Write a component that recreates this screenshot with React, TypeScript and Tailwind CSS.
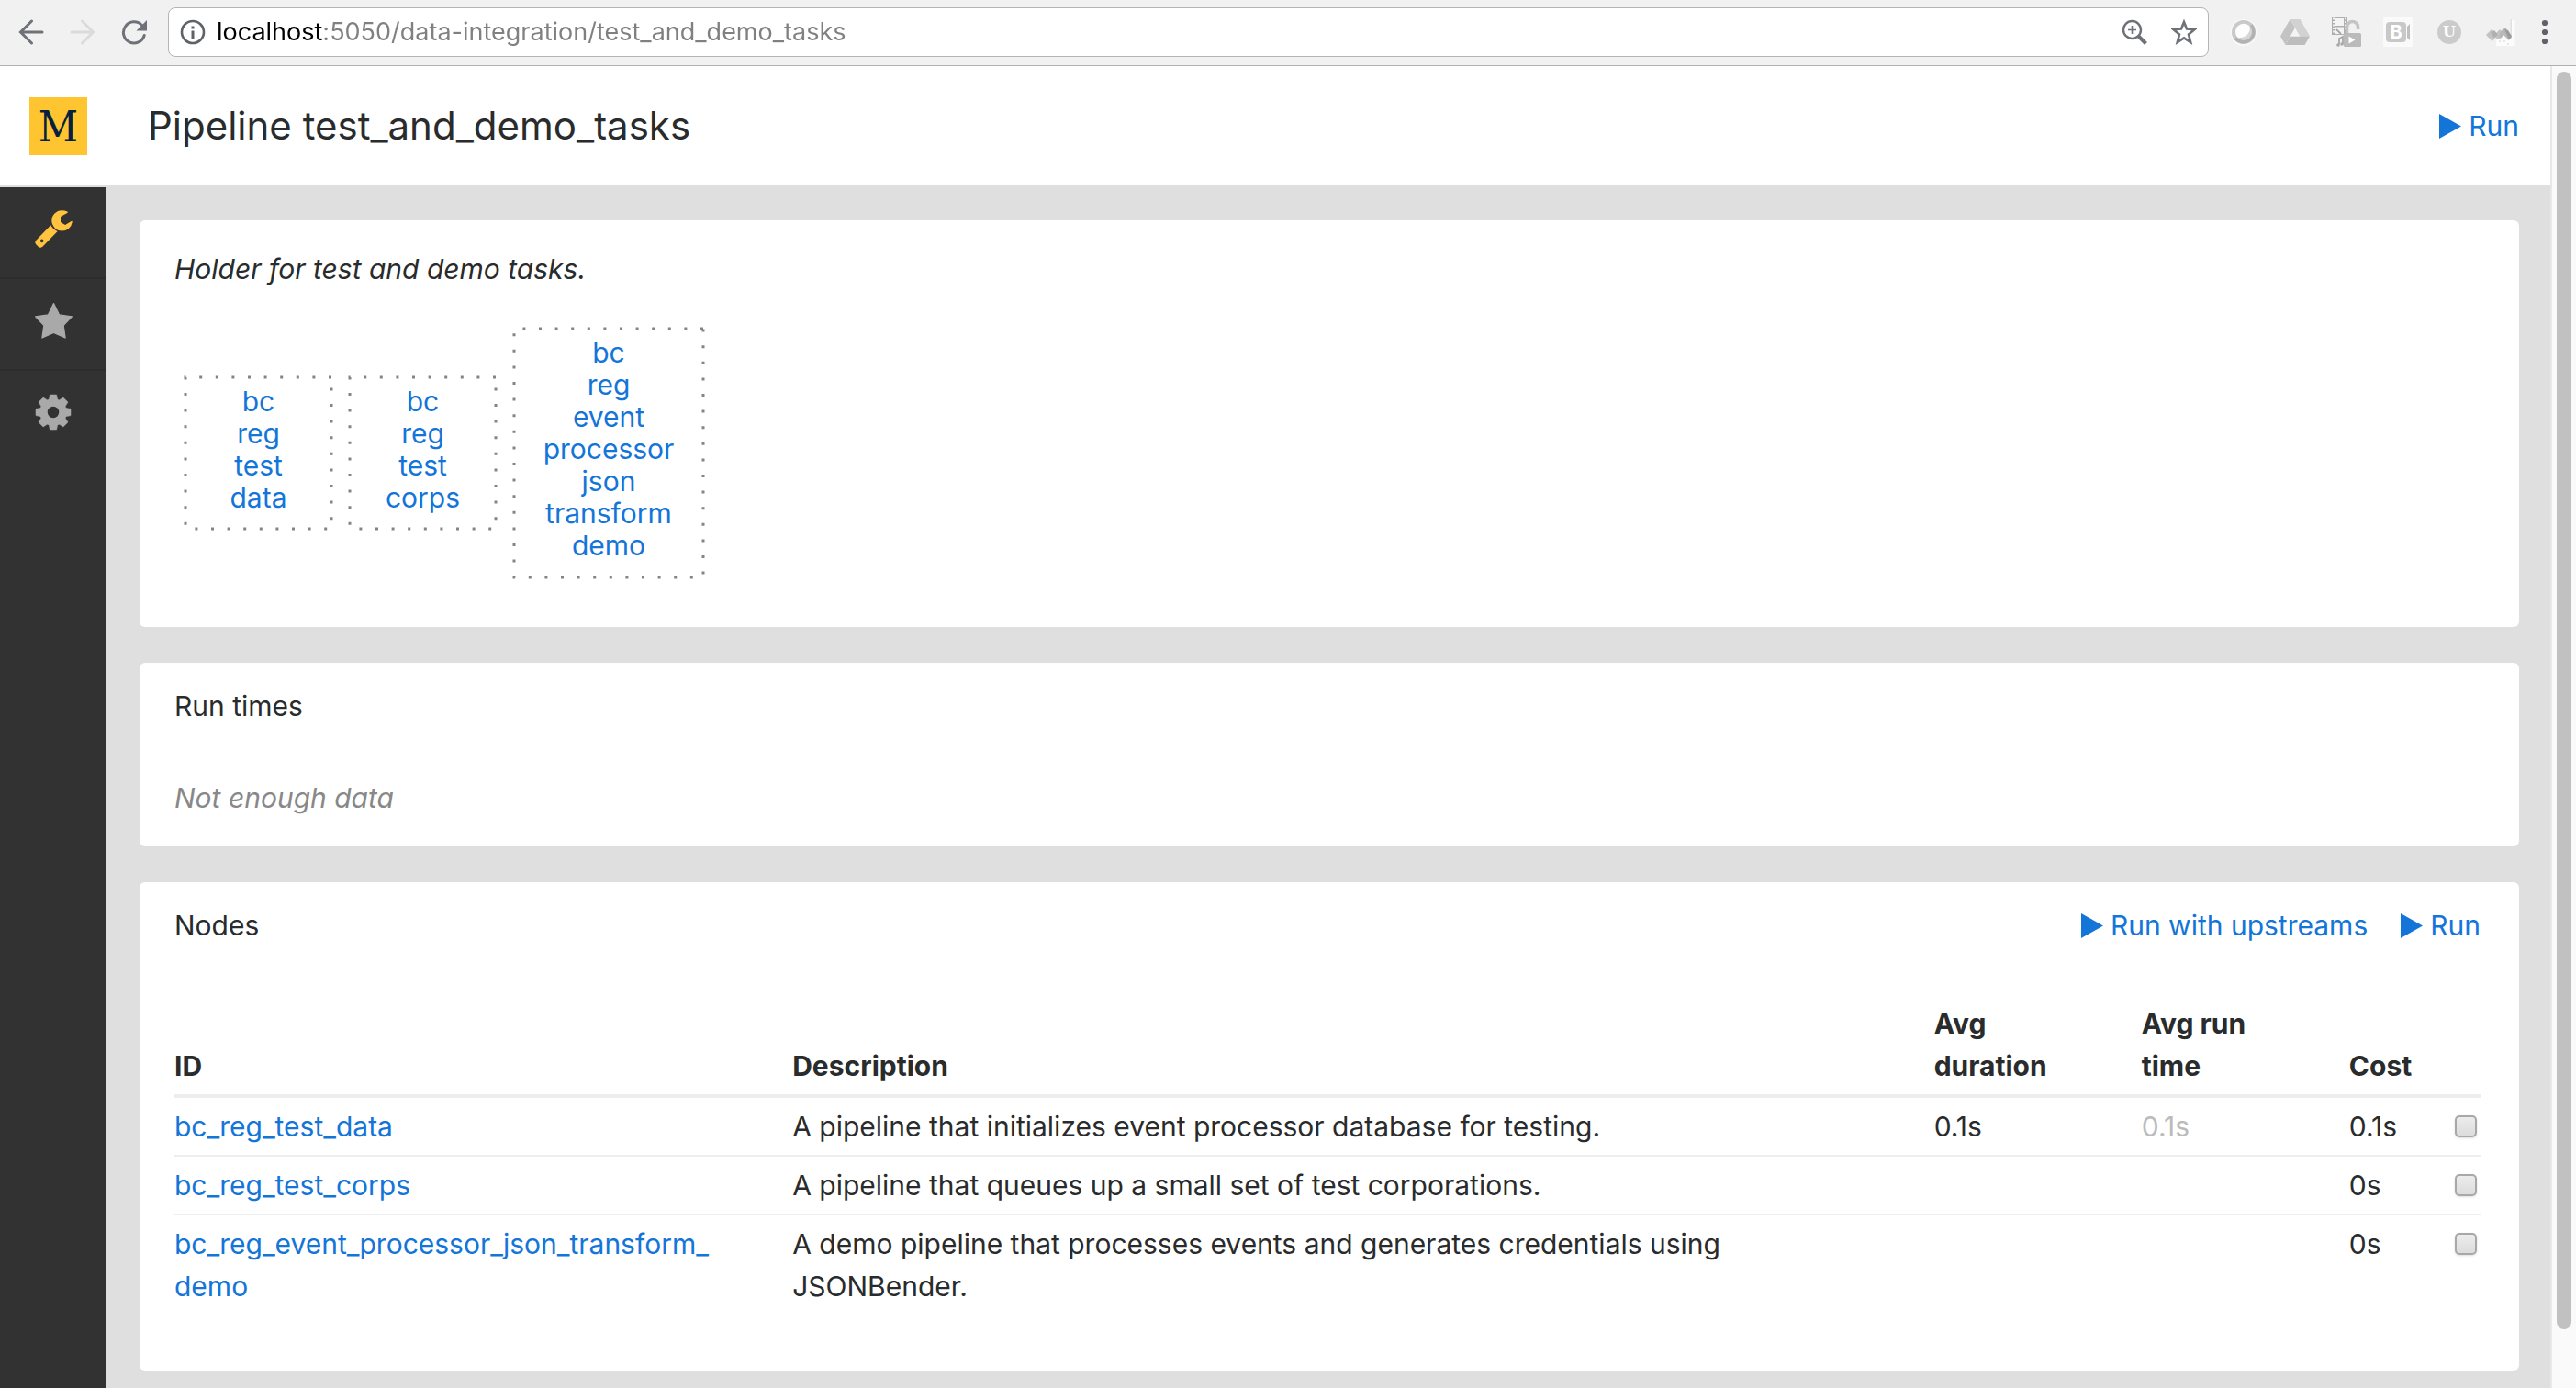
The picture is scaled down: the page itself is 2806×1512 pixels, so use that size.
import React from 'react';

/* ---------- browser toolbar icons ---------- */

function Arrow({ className }: { className: string }) {
  return (
    <svg viewBox="0 0 28 28" className={className} fill="none" stroke="currentColor" strokeWidth="3">
      <path d="M26 14H3M14.500 2 2.500 14l12 12" strokeLinecap="round" />
    </svg>
  );
}

function Reload() {
  return (
    <svg viewBox="0 0 28 28" className="size-7 text-[#6e7278]">
      <path d="M22.500 6.500A11.600 11.600 0 1 0 25.200 17.500" fill="none" stroke="currentColor" strokeWidth="3" strokeLinecap="round" />
      <path d="M28 1v11.500H16.500z" fill="currentColor" />
    </svg>
  );
}

function Info() {
  return (
    <svg viewBox="0 0 28 28" className="size-7 shrink-0 text-[#5f6368]">
      <circle cx="14" cy="14" r="12" fill="none" stroke="currentColor" strokeWidth="2.600" />
      <path d="M12.500 12.500h3v8.500h-3zM12.500 7.500h3v3h-3z" fill="currentColor" />
    </svg>
  );
}

function ZoomIn() {
  return (
    <svg viewBox="0 0 28 28" className="size-7" fill="none" stroke="currentColor">
      <circle cx="11.500" cy="11.500" r="9.500" strokeWidth="2.400" />
      <path d="M11.500 7v9M7 11.500h9" strokeWidth="1.600" />
      <path d="m18 18 8.500 8.500" strokeWidth="4" />
    </svg>
  );
}

function StarOutline() {
  return (
    <svg viewBox="0 0 28 28" className="size-7" fill="none" stroke="currentColor" strokeWidth="2.600">
      <path d="m14 3 3 7.500 8.500.700-6.500 5.300 2.200 8.500L14 20.300 6.800 25 9 16.500l-6.500-5.300 8.500-.700z" />
    </svg>
  );
}

function SphereIcon() {
  return (
    <svg viewBox="0 0 32 32" className="size-8">
      <circle cx="16" cy="16.500" r="14.500" fill="#f8f8f8" />
      <circle cx="16" cy="16" r="13" fill="#c9c9c9" />
      <path d="M25.500 7A13 13 0 0 1 5.500 23.800L9 21a8.500 8.500 0 0 0 14-11z" fill="#b2b2b2" />
      <circle cx="16" cy="16" r="9" fill="#d6d6d6" />
      <path d="M22.500 9.500C24 17 18 23 9.500 22A9 9 0 0 1 22.500 9.500z" fill="#fdfdfd" />
    </svg>
  );
}

function DriveIcon() {
  return (
    <svg viewBox="0 0 32 32" className="size-8">
      <path d="M10.500 2 16 11.500 5.500 30 0 20.500z" fill="#c3c3c3" />
      <path d="M10.500 2h11L32 20.500H21z" fill="#d2d2d2" />
      <path d="M11 20.500h21L26.500 30h-21z" fill="#bdbdbd" />
      <path d="M16 11.500 21 20.500H11z" fill="#f4f4f4" />
    </svg>
  );
}

function MediaLockIcon() {
  return (
    <svg viewBox="0 0 32 32" className="size-8">
      <path d="M0 0h17v19H0z" fill="#aeaeae" />
      <path d="M4 1h9v8H4zM4 10.500h9V18H4z" fill="#f4f4f4" />
      <path d="M1 1.500h2M1 5h2M1 8.500h2M1 12h2M1 15.500h2M14 1.500h2M14 5h2M14 8.500h2M14 12h2" stroke="#f1f1f1" strokeWidth="1.800" />
      <path d="M5 13l5 5M8 29v-6l4-2v8" fill="none" stroke="#a8a8a8" strokeWidth="1.800" />
      <circle cx="7" cy="30" r="1.800" fill="#a8a8a8" />
      <circle cx="11" cy="29" r="1.800" fill="#a8a8a8" />
      <path d="M16.500 18v-7.500a6 6 0 0 1 12 0V13" fill="none" stroke="#c4c4c4" strokeWidth="3.600" />
      <rect x="13" y="17" width="19" height="15" rx="1.500" fill="#bababa" />
      <path d="m18.500 20.500 7 4-7 4z" fill="#fff" />
    </svg>
  );
}

function BadgeB() {
  return (
    <span className="flex size-8 items-center justify-center bg-[#fafafa]">
      <span className="flex h-[22px] w-[22px] items-center justify-center rounded bg-[#c8c8c8] font-['Inter'] text-xl leading-none font-bold text-white">
        B
      </span>
      <svg viewBox="0 0 4 20" className="h-5 w-1">
        <path d="M1 4 4 1v18l-3-3z" fill="#c0c0c0" />
      </svg>
    </span>
  );
}

function BadgeU() {
  return (
    <span className="flex size-8 items-center justify-center">
      <span className="flex size-[26px] items-center justify-center rounded-full bg-[#cbcbcb] font-['DejaVu_Serif'] text-base leading-none font-bold text-white">
        U
      </span>
    </span>
  );
}

function SketchIcon() {
  return (
    <svg viewBox="0 0 32 32" className="size-8">
      <path d="M27 3h4.500v28H11v-6l16-9z" fill="#fcfcfc" />
      <path d="M26.500 2h1.500v22h-1.500z" fill="#e0e0e0" />
      <path d="m0 19 6-6 5 4 4-4 4 5-5 6-4-2-3 4z" fill="#c3c3c3" />
      <path d="m5 17 4-3 4 5-4 3z" fill="#b0b0b0" />
      <path d="m16 15 5-4 7 9-3 5-6-6-3 4-2-2z" fill="#b8b8b8" />
      <path d="m20 13 4 1 4 7-3 3z" fill="#9c9c9c" />
      <path d="M14 25h2v2h-2zM19 25h2v2h-2zM23 28h2v2h-2z" fill="#e6e6e6" />
    </svg>
  );
}

function Kebab() {
  return (
    <svg viewBox="0 0 32 32" className="size-8" fill="#5f6368">
      <circle cx="16" cy="6" r="3.100" />
      <circle cx="16" cy="16" r="3.100" />
      <circle cx="16" cy="26" r="3.100" />
    </svg>
  );
}

const extensions = [
  { label: 'Sphere', icon: <SphereIcon /> },
  { label: 'Drive', icon: <DriveIcon /> },
  { label: 'Media unlock', icon: <MediaLockIcon /> },
  { label: 'Video recorder', icon: <BadgeB /> },
  { label: 'Shield', icon: <BadgeU /> },
  { label: 'Sketch', icon: <SketchIcon /> },
];

function Toolbar() {
  return (
    <div className="flex h-[72px] items-center border-b border-[#b0b0b0] bg-[#f1f1f1] pr-[18px] pl-5 pb-0.5">
      <div className="flex w-[163px] items-center gap-7">
        <button type="button" aria-label="Back"><Arrow className="size-7 text-[#6e7278]" /></button>
        <button type="button" aria-label="Forward"><Arrow className="size-7 rotate-180 text-[#dadbdc]" /></button>
        <button type="button" aria-label="Reload"><Reload /></button>
      </div>
      <div className="flex h-[54px] flex-1 items-center rounded-lg border border-[#b5b5b5] bg-white px-3 text-[#6e7278]">
        <Info />
        <input
          type="text"
          aria-label="Address"
          defaultValue="localhost:5050/data-integration/test_and_demo_tasks"
          className="ml-3 min-w-0 flex-1 bg-[linear-gradient(to_right,#000_117px,#808080_117px)] bg-clip-text text-[27px] text-transparent outline-none"
        />
        <div className="flex gap-[26px]">
          <button type="button" aria-label="Zoom"><ZoomIn /></button>
          <button type="button" aria-label="Bookmark"><StarOutline /></button>
        </div>
      </div>
      <div className="ml-[22px] flex items-center gap-6">
        {extensions.map((e) => (
          <button key={e.label} type="button" aria-label={e.label}>{e.icon}</button>
        ))}
      </div>
      <button type="button" aria-label="Menu" className="ml-4"><Kebab /></button>
    </div>
  );
}

/* ---------- sidebar icons ---------- */

function Wrench() {
  return (
    <svg viewBox="113 117 123 123" className="size-[41px]" fill="currentColor">
      <path d="M220 125 197 138v18l15 9 20-12q4-2 3 3A33.500 33.500 0 0 1 201 184.500 33.500 33.500 0 0 1 168 151 33.500 33.500 0 0 1 201 117.500q10 0 18 4 3 2 1 3.500z" />
      <path fillRule="evenodd" d="M165 166a40 40 0 0 0 22 20l-49 50q-7 6-14 0l-7-7q-6-7 0-14zM136 211.500a5.500 5.500 0 1 0 .1 0z" />
    </svg>
  );
}

function Star() {
  return (
    <svg viewBox="112 410 124 120" className="size-[41px]" fill="currentColor" stroke="currentColor" strokeWidth="4" strokeLinejoin="round">
      <path d="m174 413 18 37 42 6-28 29 6 41-38-17-38 17 6-41-28-29 42-6z" />
    </svg>
  );
}

function Gear() {
  const teeth = [0, 45, 90, 135, 180, 225, 270, 315];
  return (
    <svg viewBox="-20 -20 40 40" className="size-10">
      <circle r="10.500" fill="none" stroke="currentColor" strokeWidth="8.500" />
      {teeth.map((a) => (
        <path key={a} transform={`rotate(${a})`} d="M-3.600 -19h7.200l1.400 6.500h-10z" fill="currentColor" stroke="currentColor" strokeWidth=".500" strokeLinejoin="round" />
      ))}
    </svg>
  );
}

const sections = [
  { label: 'Data integration', icon: <Wrench />, tone: 'text-[#ffc33f]' },
  { label: 'Favorites', icon: <Star />, tone: 'text-[#a9a9a9]' },
  { label: 'Settings', icon: <Gear />, tone: 'text-[#a9a9a9]' },
];

function Sidebar() {
  return (
    <nav className="w-[116px] shrink-0 bg-[#323232]">
      {sections.map((s) => (
        <a key={s.label} href="#" aria-label={s.label} className={`flex h-[100px] items-center justify-center border-b-2 border-[#2d2d2d] pb-2 last:border-transparent ${s.tone}`}>
          {s.icon}
        </a>
      ))}
    </nav>
  );
}

/* ---------- page ---------- */

function RunLink({ children }: { children: React.ReactNode }) {
  return (
    <a href="#" className="flex items-center gap-2 text-[#1475d9]">
      <svg viewBox="0 0 24 27" className="h-[27px] w-6" fill="currentColor">
        <path d="M0 0 24 13.500 0 27z" />
      </svg>
      {children}
    </a>
  );
}

function Card({ className, children }: { className: string; children: React.ReactNode }) {
  return <section className={`rounded-md bg-white pr-[42px] pl-[38px] ${className}`}>{children}</section>;
}

const graph = [
  { words: ['bc', 'reg', 'test', 'data'], w: 159, h: 165, size: 'w-[159px] h-[165px]' },
  { words: ['bc', 'reg', 'test', 'corps'], w: 159, h: 165, size: 'w-[159px] h-[165px]' },
  { words: ['bc', 'reg', 'event', 'processor', 'json', 'transform', 'demo'], w: 206, h: 271, size: 'w-[206px] h-[271px]' },
];

function Graph() {
  return (
    <div className="flex items-center gap-5 pl-3">
      {graph.map((n) => (
        <a key={n.words.join('_')} href="#" className={`relative flex flex-col items-center justify-center pb-2 leading-[35px] text-[#1475d9] ${n.size}`}>
          <svg viewBox={`0 0 ${n.w} ${n.h}`} className="absolute inset-0 size-full overflow-visible" fill="none" stroke="#848484" strokeWidth="3">
            <path d={`M${n.w} 0H0V${n.h}H${n.w}V0`} strokeDasharray="3 14.600" />
          </svg>
          {n.words.map((w) => (
            <span key={w}>{w}</span>
          ))}
        </a>
      ))}
    </div>
  );
}

const nodes = [
  { id: 'bc_reg_test_data', text: 'A pipeline that initializes event processor database for testing.', duration: '0.1s', run: '0.1s', cost: '0.1s' },
  { id: 'bc_reg_test_corps', text: 'A pipeline that queues up a small set of test corporations.', duration: '', run: '', cost: '0s' },
  { id: 'bc_reg_event_processor_json_transform_demo', text: 'A demo pipeline that processes events and generates credentials using JSONBender.', duration: '', run: '', cost: '0s' },
];

function NodeTable() {
  return (
    <table className="mt-[53px] w-full table-fixed border-collapse text-left">
      <colgroup>
        <col className="w-[26.8%]" />
        <col className="w-[49.5%]" />
        <col className="w-[9%]" />
        <col className="w-[9%]" />
        <col />
        <col className="w-10" />
      </colgroup>
      <thead>
        <tr className="border-b-4 border-[#eceeef] align-bottom">
          <th className="py-2 pr-14 font-bold">ID</th>
          <th className="py-2 pr-14 font-bold">Description</th>
          <th className="py-2 pr-14 font-bold">Avg duration</th>
          <th className="py-2 pr-14 font-bold">Avg run time</th>
          <th className="py-2 font-bold">Cost</th>
          <td />
        </tr>
      </thead>
      <tbody>
        {nodes.map((n) => (
          <tr key={n.id} className="border-b-2 border-[#eceeef] align-top last:border-b-0">
            <td className="py-2 pr-14">
              <a href="#" className="text-[#1475d9]">
                {n.id.split('_').map((part, i) => (
                  <React.Fragment key={i}>
                    {i > 0 && <>_<wbr /></>}
                    {part}
                  </React.Fragment>
                ))}
              </a>
            </td>
            <td className="py-2 pr-14">{n.text}</td>
            <td className="py-2">{n.duration}</td>
            <td className="py-2 text-[#bbbbbb]">{n.run}</td>
            <td className="py-2">{n.cost}</td>
            <td className="py-2 pr-1">
              <div className="flex h-[46px] items-center justify-end">
                <input
                  type="checkbox"
                  aria-label={`Select ${n.id}`}
                  className="size-6 appearance-none rounded-[5px] border-2 border-[#a8a8a8] bg-linear-to-b from-[#ececec] to-[#dcdcdc] shadow-sm"
                />
              </div>
            </td>
          </tr>
        ))}
      </tbody>
    </table>
  );
}

export default function App() {
  return (
    <div className="flex min-h-screen flex-col bg-[#dfdfdf] font-['Inter','Liberation_Sans',sans-serif] text-[30px] leading-[46px] text-[#292b2c]">
      <Toolbar />
      <div className="flex flex-1">
        <div className="flex min-w-0 flex-1 flex-col">
          <header className="flex h-[132px] items-center border-b-2 border-[#dfdfdf] bg-white pr-[34px] pl-8">
            <a href="#" aria-label="Home" className="flex size-[63px] items-center justify-center bg-[#ffc530] font-['DejaVu_Serif_Condensed','DejaVu_Serif',serif] text-[47px] leading-none text-[#06213f]">
              M
            </a>
            <h1 className="ml-[66px] flex-1 text-[42px]">Pipeline test_and_demo_tasks</h1>
            <RunLink>Run</RunLink>
          </header>
          <div className="flex flex-1">
            <Sidebar />
            <main className="flex min-w-0 flex-1 flex-col gap-[39px] pt-9 pr-[34px] pb-4 pl-9">
              <Card className="pt-[30px] pb-[54px]">
                <p className="mb-[42px] italic">Holder for test and demo tasks.</p>
                <Graph />
              </Card>
              <Card className="pt-6 pb-[30px]">
                <h2>Run times</h2>
                <p className="mt-[54px] text-[#888888] italic">Not enough data</p>
              </Card>
              <Card className="pt-6 pb-[61px]">
                <div className="flex items-center">
                  <h2 className="flex-1">Nodes</h2>
                  <div className="flex gap-9">
                    <RunLink>Run with upstreams</RunLink>
                    <RunLink>Run</RunLink>
                  </div>
                </div>
                <NodeTable />
              </Card>
            </main>
          </div>
        </div>
        <div className="flex w-7 flex-col border-l-2 border-[#e8e8e8] bg-[#fafafa] px-[5px] pt-1.5 pb-16">
          <div className="flex-1 rounded-full bg-[#c1c1c1]" />
        </div>
      </div>
    </div>
  );
}
